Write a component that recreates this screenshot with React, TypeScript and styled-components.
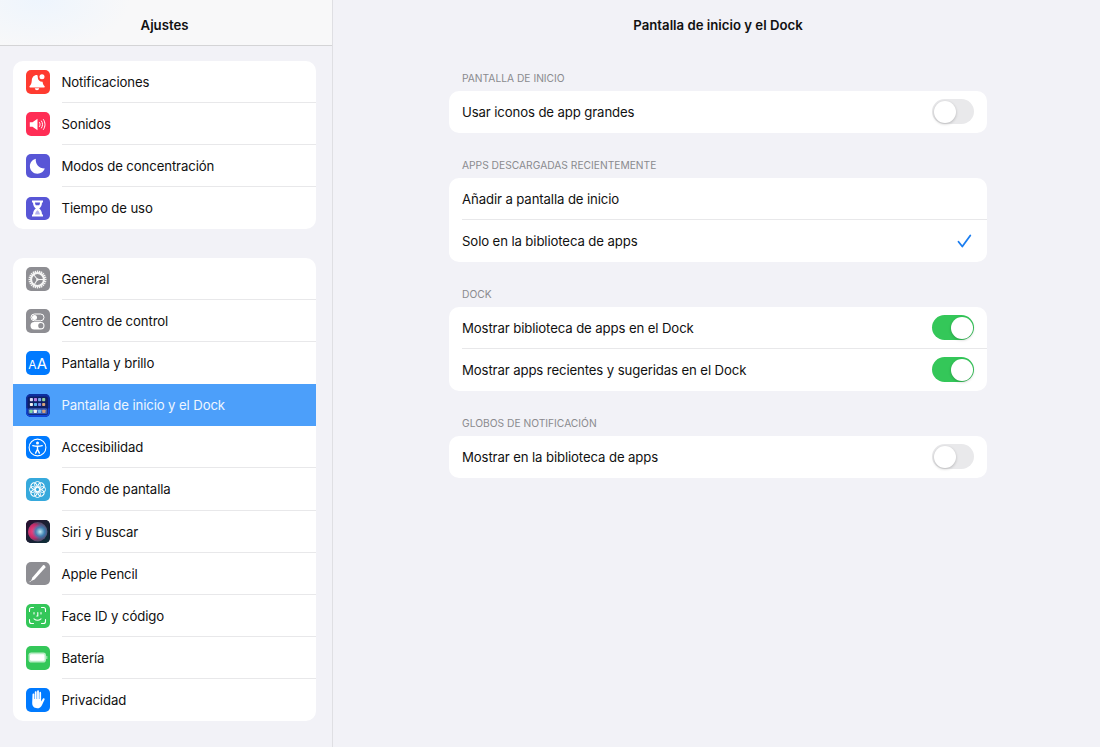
import React from 'react';
import styled, { createGlobalStyle } from 'styled-components';

const GlobalStyle = createGlobalStyle`
  html, body {
    margin: 0;
    padding: 0;
    height: 100%;
    background: #f2f2f7;
    font-family: Inter, "Liberation Sans", sans-serif;
    color: #111;
  }
  #root { height: 100%; }
  * { box-sizing: border-box; }
`;

const Screen = styled.div`
  display: flex;
  width: 1100px;
  height: 747px;
  overflow: hidden;
  background: #f2f2f7;
`;

const Sidebar = styled.aside`
  width: 333px;
  flex: none;
  border-right: 1px solid #dfdfe3;
  display: flex;
  flex-direction: column;
`;

const SidebarHeader = styled.header`
  height: 46px;
  flex: none;
  display: flex;
  align-items: center;
  justify-content: center;
  padding: 5px 3px 0 0;
  font-size: 13.2px;
  font-weight: 600;
  border-bottom: 1px solid #d4d4d6;
  background: radial-gradient(ellipse 90px 50px at 40px 0, #eef5fd 0%, rgba(247, 247, 249, 0) 100%), #f8f8f9;
`;

const SidebarBody = styled.div`
  padding: 15px 16px 0 13px;
  display: flex;
  flex-direction: column;
  gap: 28.6px;
`;

const Card = styled.div`
  background: #fff;
  border-radius: 10px;
  overflow: hidden;
`;

const NavRow = styled.div<{ $active?: boolean }>`
  height: 42.1px;
  display: flex;
  align-items: center;
  padding-left: 13px;
  gap: 12px;
  background: ${p => (p.$active ? '#4c9ffa' : 'transparent')};
  color: ${p => (p.$active ? '#eef6ff' : '#111')};
`;

const NavLabel = styled.div<{ $divider: boolean }>`
  flex: 1;
  height: 100%;
  display: flex;
  align-items: center;
  font-size: 13.2px;
  letter-spacing: -0.12px;
  box-shadow: ${p => (p.$divider ? 'inset 0 -1px 0 #e8e8ea' : 'none')};
`;

const IconTile = styled.div<{ $bg: string }>`
  width: 23.5px;
  height: 23.5px;
  flex: none;
  border-radius: 5px;
  background: ${p => p.$bg};
  display: flex;
  align-items: center;
  justify-content: center;
  overflow: hidden;
  svg { display: block; }
`;

const AaGlyph = styled.span`
  color: #fff;
  font-size: 15px;
  line-height: 1;
  letter-spacing: 0.3px;
  small { font-size: 12px; }
`;

const Main = styled.main`
  flex: 1;
  padding-left: 116px;
`;

const Column = styled.div`
  width: 538px;
`;

const Title = styled.h1`
  margin: 0;
  height: 46px;
  padding-top: 4px;
  display: flex;
  align-items: center;
  justify-content: center;
  font-size: 13.2px;
  font-weight: 600;
`;

const Sections = styled.div`
  padding-top: 23px;
  display: flex;
  flex-direction: column;
  gap: 23px;
`;

const SectionLabel = styled.div`
  height: 17px;
  margin-bottom: 5px;
  padding-left: 13px;
  display: flex;
  align-items: center;
  font-size: 10.25px;
  color: #8a8a8e;
`;

const OptionRow = styled.div`
  height: 42px;
  margin-left: 13px;
  padding: 0 13px 1px 0;
  display: flex;
  align-items: center;
  justify-content: space-between;
  font-size: 13.2px;
  letter-spacing: -0.12px;
  & + & { box-shadow: 0 -1px 0 #e8e8ea; }
`;

const Toggle = styled.div<{ $on?: boolean }>`
  width: 42px;
  height: 25px;
  padding: 1.5px;
  border-radius: 13px;
  display: flex;
  justify-content: ${p => (p.$on ? 'flex-end' : 'flex-start')};
  background: ${p => (p.$on ? '#34c759' : '#e9e9eb')};
`;

const Knob = styled.div`
  width: 22px;
  height: 22px;
  border-radius: 50%;
  background: #fff;
  box-shadow: 0 1px 3px rgba(0, 0, 0, 0.22);
`;

const CheckMark = styled.svg`
  margin-right: 2px;
`;

const W = '#fff';

const Bell = () => (
  <svg width="23" height="23" viewBox="0 0 23 23">
    <path fill={W} d="M11 4c-3.300 0-5 2.400-5.200 5.500-.2 2.800-.7 4.200-2.200 5.700-.4.500-.2 1.200.5 1.200h14c.7 0 .9-.7.500-1.200-1.300-1.400-1.800-2.600-2-4.500-2.600.200-4.800-1.800-4.800-4.300 0-1.300-.3-2.400-.8-2.400z" />
    <circle cx="16" cy="5.800" r="2.500" fill={W} />
    <path fill={W} d="M8.800 17.300h4.400c-.1 1.200-1.100 2-2.200 2s-2.100-.8-2.200-2z" />
  </svg>
);

const Speaker = () => (
  <svg width="23" height="23" viewBox="0 0 23 23" fill="none">
    <path fill={W} d="M3.800 9.200h2.700L11.500 5.800v11.400L6.500 13.800H3.800z" />
    <path stroke={W} strokeWidth="1" strokeLinecap="round" d="M13.500 9.500c.8 1.200.8 2.800 0 4M15.500 8c1.400 2.200 1.400 4.800 0 7M17.500 6.600c2 3 2 6.800 0 9.800" />
  </svg>
);

const Moon = () => (
  <svg width="23" height="23" viewBox="0 0 23 23">
    <path fill={W} d="M9.800 3.800c-.6 5 2.800 9.600 9 9.800-1 3-3.900 5.200-7.300 5.200-4.200 0-7.600-3.400-7.600-7.500 0-3.600 2.500-6.600 5.900-7.500z" />
  </svg>
);

const Hourglass = () => (
  <svg width="23" height="23" viewBox="0 0 23 23">
    <path fill={W} d="M6 3.500h11v2h-1c0 3-1.300 4.700-2.800 6 1.500 1.300 2.800 3 2.800 6h1v2H6v-2h1c0-3 1.300-4.700 2.800-6C8.300 10.200 7 8.500 7 5.500H6z" />
    <path fill="#5856d6" d="M9 5.500h5c0 1-.3 2-.8 2.800H9.800C9.300 7.500 9 6.500 9 5.500z" />
    <path fill="#5856d6" d="M11.500 13.300c-1.200 1-2.200 2-2.400 4.200h4.800c-.2-2.200-1.200-3.200-2.400-4.200z" opacity=".45" />
  </svg>
);

const Gear = () => {
  const teeth = Array.from({ length: 24 }, (_, i) => i * 15);
  return (
    <svg width="23" height="23" viewBox="0 0 23 23" fill="none">
      {teeth.map(a => (
        <rect key={a} x="10.800" y="2.500" width="1.400" height="3" fill="#f4f4f4" transform={`rotate(${a} 11.500 11.500)`} />
      ))}
      <circle cx="11.500" cy="11.500" r="6.400" stroke="#f4f4f4" strokeWidth="2" />
      <path stroke="#f4f4f4" strokeWidth="1.100" d="M11.500 11.500L7.500 6.500M11.500 11.500h6M11.500 11.500L8 17" />
      <circle cx="11.500" cy="11.500" r="1.200" fill="#f4f4f4" />
    </svg>
  );
};

const Switches = () => (
  <svg width="23" height="23" viewBox="0 0 23 23" fill="none">
    <rect x="5" y="4" width="13" height="6.800" rx="3.400" stroke={W} strokeWidth="1" />
    <circle cx="8.500" cy="7.400" r="2.500" fill={W} />
    <rect x="4.500" y="12" width="14" height="7.400" rx="3.700" fill={W} />
    <circle cx="14.800" cy="15.700" r="2.600" fill="#8e8e93" />
  </svg>
);

const dots = [
  '#d7d9f5', '#b57fe0', '#7fa6f2', '#8fd0a0',
  '#f2f2f2', '#59b5ef', '#7585f0', '#d8a37a',
];
const dockDots = ['#7dd8a8', '#f3f3f3', '#6cb6ee', '#cf9f7d'];

const HomeGrid = () => (
  <svg width="23.500" height="23.500" viewBox="0 0 23 23">
    <rect width="23" height="23" fill="#0d2f9f" />
    <rect y="14" width="23" height="9" fill="#0f46d8" />
    <rect x="1.500" y="2.500" width="20" height="18" rx="2" fill="#10163f" opacity=".6" />
    {dots.map((c, i) => (
      <rect key={i} x={3.800 + (i % 4) * 4} y={i < 4 ? 4 : 8.800} width="3" height="3" rx=".7" fill={c} />
    ))}
    <rect x="2.200" y="14" width="18.600" height="5.600" rx="1.500" fill="#4d70cc" opacity=".7" />
    {dockDots.map((c, i) => (
      <rect key={c} x={3.300 + i * 4.200} y="15.300" width="3.200" height="3.200" rx=".7" fill={c} />
    ))}
  </svg>
);

const Accessibility = () => (
  <svg width="23" height="23" viewBox="0 0 23 23" fill="none">
    <circle cx="11.500" cy="11.500" r="8.400" stroke={W} strokeWidth="1.100" />
    <circle cx="11.500" cy="7.100" r="1.500" fill={W} />
    <path stroke={W} strokeWidth="1.400" strokeLinecap="round" strokeLinejoin="round" d="M6.800 9.600c3 .8 6.400.8 9.400 0M11.500 10.200v3.200M11.500 13.200l-1.900 3.900M11.500 13.200l1.900 3.900" />
  </svg>
);

const Flower = () => {
  const petals = [0, 45, 90, 135, 180, 225, 270, 315];
  return (
    <svg width="23" height="23" viewBox="0 0 23 23" fill="none" stroke={W} strokeWidth=".95">
      {petals.map(a => (
        <circle key={a} cx="11.500" cy="6.500" r="3" transform={`rotate(${a} 11.500 11.500)`} />
      ))}
      <circle cx="11.500" cy="11.500" r="2.600" />
    </svg>
  );
};

const Siri = () => (
  <svg width="23.500" height="23.500" viewBox="0 0 23 23">
    <defs>
      <radialGradient id="siriBlue" cx="62%" cy="50%" r="42%">
        <stop offset="0" stopColor="#c6eef2" />
        <stop offset=".55" stopColor="#3a86b8" stopOpacity=".9" />
        <stop offset="1" stopColor="#3f7fbf" stopOpacity="0" />
      </radialGradient>
      <radialGradient id="siriPink" cx="30%" cy="48%" r="50%">
        <stop offset="0" stopColor="#f8457f" />
        <stop offset=".7" stopColor="#c02a68" />
        <stop offset="1" stopColor="#a0285f" stopOpacity="0" />
      </radialGradient>
      <linearGradient id="siriBase" x1="0" y1="0" x2="1" y2="1">
        <stop offset="0" stopColor="#2a0f30" />
        <stop offset="1" stopColor="#0b3038" />
      </linearGradient>
    </defs>
    <rect width="23" height="23" fill="url(#siriBase)" />
    <circle cx="11.500" cy="11.500" r="9.500" fill="#5a4a6b" />
    <circle cx="11.500" cy="11.500" r="9.500" fill="url(#siriPink)" />
    <circle cx="11.500" cy="11.500" r="9.500" fill="url(#siriBlue)" />
  </svg>
);

const Pencil = () => (
  <svg width="23" height="23" viewBox="0 0 23 23">
    <path fill={W} d="M17 3.200c1-.6 3 1.200 2.400 2.300L8.500 17.400l-3.400 1.500 1.300-3.500z" />
    <path stroke={W} strokeWidth=".8" d="M3.500 20.200L5 18.700" />
  </svg>
);

const FaceId = () => (
  <svg width="23" height="23" viewBox="0 0 23 23" fill="none" stroke={W} strokeWidth="1.100" strokeLinecap="round" strokeLinejoin="round">
    <path d="M3.500 7.500V5.500a2 2 0 0 1 2-2h2M15.500 3.500h2a2 2 0 0 1 2 2v2M19.500 15.500v2a2 2 0 0 1-2 2h-2M7.500 19.500h-2a2 2 0 0 1-2-2v-2" />
    <path d="M8 8.500v1.500M15 8.500v1.500M11.800 8.500v3.500h-1M8 14.800c2 1.700 5 1.700 7 0" />
  </svg>
);

const Battery = () => (
  <svg width="23" height="23" viewBox="0 0 23 23">
    <rect x="2.500" y="6.500" width="17.500" height="10" rx="2.800" fill="#b9ecc6" />
    <rect x="4" y="8.200" width="14.500" height="6.600" rx="1.300" fill={W} />
    <rect x="20.300" y="10" width="1" height="3" rx=".5" fill="#b9ecc6" />
  </svg>
);

const Hand = () => (
  <svg width="23" height="23" viewBox="0 0 23 23">
    <path fill={W} d="M6.500 6.500c0-1.300 1.800-1.300 1.800 0V11h.5V4.200c0-1.300 1.800-1.300 1.800 0V11h.5V3.300c0-1.300 1.800-1.300 1.800 0V11h.5V4.700c0-1.300 1.700-1.300 1.700 0v8.800l1.700-2.700c.8-1.100 2.300-.2 1.700 1l-2.600 5.400c-.9 2-2.500 3.100-4.700 3.100-3.100 0-5-2-5-5.200z" />
  </svg>
);

const Aa = () => (
  <AaGlyph>
    <small>A</small>A
  </AaGlyph>
);

const Check = () => (
  <CheckMark width="15" height="14" viewBox="0 0 15 14" fill="none">
    <path d="M1.500 7.800l3.800 4.700L13.300 1.500" stroke="#1c7ef0" strokeWidth="1.800" strokeLinecap="round" strokeLinejoin="round" />
  </CheckMark>
);

type NavItem = { label: string; bg: string; icon: React.ReactNode; active?: boolean };

const focusGroup: NavItem[] = [
  { label: 'Notificaciones', bg: '#ff3b30', icon: <Bell /> },
  { label: 'Sonidos', bg: '#ff2d55', icon: <Speaker /> },
  { label: 'Modos de concentración', bg: '#5856d6', icon: <Moon /> },
  { label: 'Tiempo de uso', bg: '#5856d6', icon: <Hourglass /> },
];

const systemGroup: NavItem[] = [
  { label: 'General', bg: '#8e8e93', icon: <Gear /> },
  { label: 'Centro de control', bg: '#8e8e93', icon: <Switches /> },
  { label: 'Pantalla y brillo', bg: '#007aff', icon: <Aa /> },
  { label: 'Pantalla de inicio y el Dock', bg: '#0d2f9f', icon: <HomeGrid />, active: true },
  { label: 'Accesibilidad', bg: '#007aff', icon: <Accessibility /> },
  { label: 'Fondo de pantalla', bg: '#36a9dc', icon: <Flower /> },
  { label: 'Siri y Buscar', bg: '#1c1030', icon: <Siri /> },
  { label: 'Apple Pencil', bg: '#8e8e93', icon: <Pencil /> },
  { label: 'Face ID y código', bg: '#34c759', icon: <FaceId /> },
  { label: 'Batería', bg: '#34c759', icon: <Battery /> },
  { label: 'Privacidad', bg: '#007aff', icon: <Hand /> },
];

const NavGroup: React.FC<{ items: NavItem[] }> = ({ items }) => (
  <Card>
    {items.map((item, i) => (
      <NavRow key={item.label} $active={item.active}>
        <IconTile $bg={item.bg}>{item.icon}</IconTile>
        <NavLabel $divider={i < items.length - 1 && !item.active && !items[i + 1].active}>{item.label}</NavLabel>
      </NavRow>
    ))}
  </Card>
);

const App: React.FC = () => (
  <Screen>
    <GlobalStyle />
    <Sidebar>
      <SidebarHeader>Ajustes</SidebarHeader>
      <SidebarBody>
        <NavGroup items={focusGroup} />
        <NavGroup items={systemGroup} />
      </SidebarBody>
    </Sidebar>
    <Main>
      <Column>
        <Title>Pantalla de inicio y el Dock</Title>
        <Sections>
          <section>
            <SectionLabel>PANTALLA DE INICIO</SectionLabel>
            <Card>
              <OptionRow>
                Usar iconos de app grandes
                <Toggle><Knob /></Toggle>
              </OptionRow>
            </Card>
          </section>
          <section>
            <SectionLabel>APPS DESCARGADAS RECIENTEMENTE</SectionLabel>
            <Card>
              <OptionRow>Añadir a pantalla de inicio</OptionRow>
              <OptionRow>
                Solo en la biblioteca de apps
                <Check />
              </OptionRow>
            </Card>
          </section>
          <section>
            <SectionLabel>DOCK</SectionLabel>
            <Card>
              <OptionRow>
                Mostrar biblioteca de apps en el Dock
                <Toggle $on><Knob /></Toggle>
              </OptionRow>
              <OptionRow>
                Mostrar apps recientes y sugeridas en el Dock
                <Toggle $on><Knob /></Toggle>
              </OptionRow>
            </Card>
          </section>
          <section>
            <SectionLabel>GLOBOS DE NOTIFICACIÓN</SectionLabel>
            <Card>
              <OptionRow>
                Mostrar en la biblioteca de apps
                <Toggle><Knob /></Toggle>
              </OptionRow>
            </Card>
          </section>
        </Sections>
      </Column>
    </Main>
  </Screen>
);

export default App;
